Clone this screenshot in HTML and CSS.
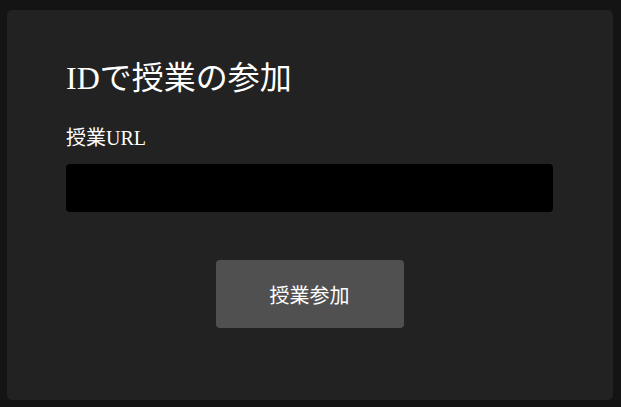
FILE: index.html
```html
<!DOCTYPE html>
<html lang="ja">
<head>
  <meta charset="utf-8">
  <title>IDで授業の参加</title>
  <link rel="stylesheet" href="styles.css">
</head>
<body>
  <div class="card">
    <h1>IDで授業の参加</h1>
    <label for="url">授業URL</label>
    <input type="text" id="url">
    <div class="actions">
      <button>授業参加</button>
    </div>
  </div>
</body>
</html>
```

FILE: styles.css
```css
body {
  margin: 0;
  padding: 10px 8px 7px 7px;
  background-color: #141414;
  font-family: "Liberation Serif", "Noto Sans CJK JP", serif;
  color: #fff;
}

.card {
  display: flex;
  flex-direction: column;
  padding: 48px 60px 72px 59px;
  background-color: #222;
  border-radius: 5px;
}

h1 {
  margin: 0;
  font-size: 32px;
  line-height: 40px;
  font-weight: normal;
}

label {
  margin-top: 28px;
  font-size: 20px;
  line-height: 24px;
}

input {
  margin-top: 14px;
  height: 48px;
  box-sizing: border-box;
  border: none;
  border-radius: 4px;
  background-color: #000;
  color: #fff;
  padding: 0 12px;
  font-size: 18px;
}

.actions {
  display: flex;
  justify-content: center;
  margin-top: 48px;
}

button {
  width: 188px;
  height: 68px;
  border: none;
  border-radius: 4px;
  background-color: #505050;
  color: #fff;
  font-family: "Noto Sans CJK JP", sans-serif;
  font-size: 20px;
  cursor: pointer;
}
```
